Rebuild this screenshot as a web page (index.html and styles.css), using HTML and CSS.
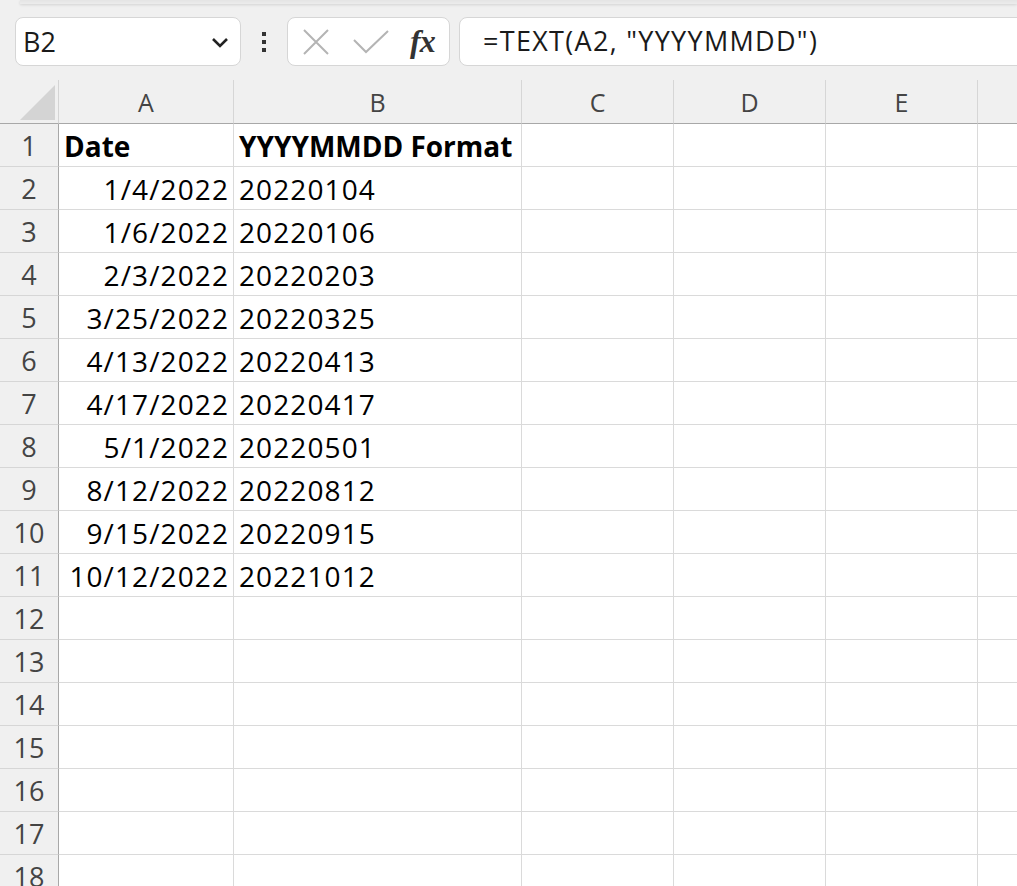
FILE: index.html
```html
<!DOCTYPE html>
<html>

<head lang="en">
  <meta charset="UTF-8">
  <title>Sheet1</title>
  <link rel="stylesheet" href="styles.css">
</head>

<body>
  <div class="ribbon-edge"></div>
  <div class="formula-bar">
    <div class="name-box">
      <span class="name-text">B2</span>
      <svg class="chevron" width="18" height="12" viewBox="0 0 18 12">
        <path d="M2 2 L9 9 L16 2" fill="none" stroke="#222" stroke-width="2.6" />
      </svg>
    </div>
    <div class="dots">
      <span></span><span></span><span></span>
    </div>
    <div class="fx-box">
      <svg width="28" height="28" viewBox="0 0 28 28">
        <path d="M2 2 L26 26 M26 2 L2 26" fill="none" stroke="#b4b4b4" stroke-width="2" />
      </svg>
      <svg width="36" height="24" viewBox="0 0 36 24">
        <path d="M1 10 L13 22 L35 1" fill="none" stroke="#b4b4b4" stroke-width="2" />
      </svg>
      <span class="fx">fx</span>
    </div>
    <div class="formula-box">=TEXT(A2, "YYYYMMDD")</div>
  </div>

  <div class="sheet" id="sheet">
    <div class="corner"><span class="corner-tri"></span></div>
    <div class="col-head">A</div>
    <div class="col-head">B</div>
    <div class="col-head">C</div>
    <div class="col-head">D</div>
    <div class="col-head">E</div>
    <div class="col-head last"></div>
  </div>

  <script>
    // data for the rows
    var rows = [
      ['Date', 'YYYYMMDD Format'],
      ['1/4/2022', '20220104'],
      ['1/6/2022', '20220106'],
      ['2/3/2022', '20220203'],
      ['3/25/2022', '20220325'],
      ['4/13/2022', '20220413'],
      ['4/17/2022', '20220417'],
      ['5/1/2022', '20220501'],
      ['8/12/2022', '20220812'],
      ['9/15/2022', '20220915'],
      ['10/12/2022', '20221012']
    ];

    var sheet = document.getElementById('sheet');
    var html = '';
    for (var i = 1; i <= 18; i++) {
      var r = rows[i - 1] || ['', ''];
      var bold = i == 1 ? ' bold' : '';
      var alignA = i == 1 ? ' left' : ' right';
      html += '<div class="row-head">' + i + '</div>';
      html += '<div class="cell' + bold + alignA + '">' + r[0] + '</div>';
      html += '<div class="cell' + bold + '">' + r[1] + '</div>';
      html += '<div class="cell"></div><div class="cell"></div><div class="cell"></div>';
      html += '<div class="cell last"></div>';
    }
    sheet.insertAdjacentHTML('beforeend', html);
  </script>
</body>

</html>
```

FILE: styles.css
```css
html,
body {
  margin: 0;
  padding: 0;
}

body {
  width: 1017px;
  height: 886px;
  overflow: hidden;
  background: #f0f0f0;
  font-family: "Open Sans", "Noto Sans", sans-serif;
}

.ribbon-edge {
  height: 4px;
  margin-left: 20px;
  background: linear-gradient(#e4e4e4, #ececec);
  box-shadow: 0 1px 3px rgba(0, 0, 0, 0.12);
}

.formula-bar {
  display: flex;
  align-items: center;
  height: 76px;
  padding-left: 15px;
  box-sizing: border-box;
  padding-top: 13px;
  padding-bottom: 14px;
}

.name-box {
  width: 226px;
  height: 49px;
  box-sizing: border-box;
  background: #fff;
  border: 1px solid #d6d6d6;
  border-radius: 8px;
  display: flex;
  align-items: center;
  justify-content: space-between;
  padding: 0 11px 0 7px;
}

.name-text {
  font-size: 27px;
  color: #1a1a1a;
}

.chevron {
  margin-top: 3px;
}

.dots {
  width: 46px;
  display: flex;
  flex-direction: column;
  align-items: center;
  gap: 4px;
}

.dots span {
  width: 4px;
  height: 4px;
  background: #333;
}

.fx-box {
  width: 163px;
  height: 49px;
  box-sizing: border-box;
  background: #fff;
  border: 1px solid #d6d6d6;
  border-radius: 8px;
  display: flex;
  align-items: center;
  padding: 0 10px 0 14px;
  gap: 23px;
}

.fx {
  font-family: "Liberation Serif", "DejaVu Serif", serif;
  font-style: italic;
  font-weight: bold;
  font-size: 32px;
  color: #333;
  margin-left: -2px;
  letter-spacing: -1px;
}

.formula-box {
  flex: 1;
  height: 49px;
  margin-left: 9px;
  margin-right: -20px;
  box-sizing: border-box;
  background: #fff;
  border: 1px solid #d6d6d6;
  border-radius: 8px;
  padding-left: 23px;
  font-size: 27px;
  letter-spacing: 1.3px;
  line-height: 45px;
  color: #1a1a1a;
}

.sheet {
  display: grid;
  grid-template-columns: 59px 175px 288px 152px 152px 152px 1fr;
  grid-template-rows: 44px;
  grid-auto-rows: 43px;
}

.corner {
  box-sizing: border-box;
  border-right: 1px solid #d4d4d4;
  border-bottom: 1px solid #a8a8a8;
  position: relative;
}

.corner-tri {
  position: absolute;
  right: 3px;
  bottom: 3px;
  width: 0;
  height: 0;
  border-left: 35px solid transparent;
  border-bottom: 35px solid #d4d4d4;
}

.col-head {
  box-sizing: border-box;
  border-right: 1px solid #d6d6d6;
  border-bottom: 1px solid #a8a8a8;
  text-align: center;
  font-size: 25px;
  line-height: 44px;
  color: #444;
}

.col-head.last,
.cell.last {
  border-right: none;
}

.row-head {
  box-sizing: border-box;
  border-right: 1px solid #a8a8a8;
  border-bottom: 1px solid #d6d6d6;
  text-align: center;
  font-size: 27px;
  line-height: 42px;
  padding-top: 1px;
  color: #444;
}

.cell {
  box-sizing: border-box;
  background: #fff;
  border-right: 1px solid #dadada;
  border-bottom: 1px solid #dadada;
  font-size: 28px;
  line-height: 42px;
  padding: 1px 5px 0;
  letter-spacing: 1.1px;
  color: #000;
  white-space: nowrap;
}

.cell.right {
  text-align: right;
  padding-right: 4px;
}

.cell.bold {
  font-weight: bold;
  letter-spacing: 0;
}
```
